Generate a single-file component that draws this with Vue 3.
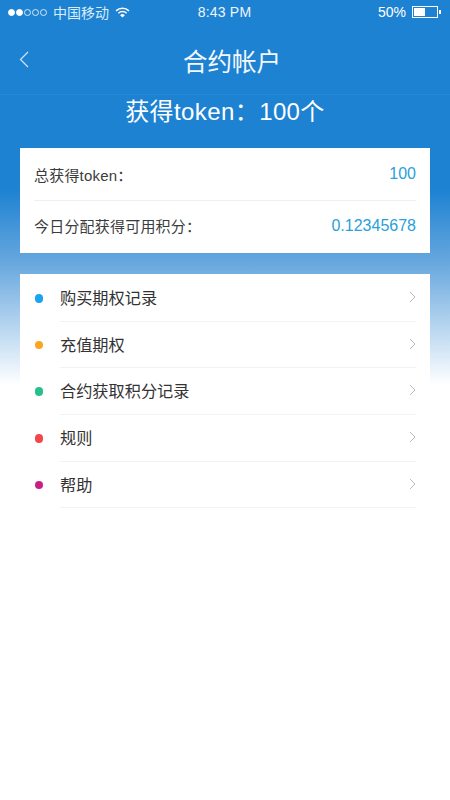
<script setup>
const stats = [
  { label: '总获得token：', value: '100' },
  { label: '今日分配获得可用积分：', value: '0.12345678' }
]
const items = [
  { label: '购买期权记录', color: '#1aa3ee' },
  { label: '充值期权', color: '#f9a623' },
  { label: '合约获取积分记录', color: '#27c08a' },
  { label: '规则', color: '#f2474a' },
  { label: '帮助', color: '#c91f80' }
]
</script>

<template>
  <div class="page">
    <div class="status">
      <div class="status-left">
        <span class="signal">
          <i class="on"></i><i class="on"></i><i></i><i></i><i></i>
        </span>
        <span class="carrier">中国移动</span>
        <svg class="wifi" width="15" height="11" viewBox="0 0 16 12">
          <path d="M1 4.2a10 10 0 0 1 14 0" fill="none" stroke="#fff" stroke-width="1.7"/>
          <path d="M3.5 6.8a6.4 6.4 0 0 1 9 0" fill="none" stroke="#fff" stroke-width="1.7"/>
          <path d="M8 11.5 5.4 8.9a3.7 3.7 0 0 1 5.2 0z" fill="#fff"/>
        </svg>
      </div>
      <span class="time">8:43 PM</span>
      <div class="status-right">
        <span>50%</span>
        <span class="battery"><b></b></span>
        <span class="tip"></span>
      </div>
    </div>

    <header class="nav">
      <svg class="back" width="10" height="17" viewBox="0 0 10 17">
        <path d="M9 1 1.5 8.5 9 16" fill="none" stroke="#cfe6fa" stroke-width="1.2"/>
      </svg>
      <h1>合约帐户</h1>
    </header>

    <h2 class="total">获得token：100个</h2>

    <section class="card stats">
      <div v-for="s in stats" :key="s.label" class="stat">
        <span class="stat-label">{{ s.label }}</span>
        <span class="stat-value">{{ s.value }}</span>
      </div>
    </section>

    <section class="card list">
      <div v-for="item in items" :key="item.label" class="item">
        <span class="dot" :style="{ background: item.color }"></span>
        <div class="item-body">
          <span>{{ item.label }}</span>
          <svg width="7" height="12" viewBox="0 0 7 12">
            <path d="M1 1l5 5-5 5" fill="none" stroke="#b9b9be" stroke-width="1"/>
          </svg>
        </div>
      </div>
    </section>
  </div>
</template>

<style scoped>
.page {
  width: 450px;
  height: 800px;
  overflow: hidden;
  box-sizing: border-box;
  background: linear-gradient(180deg, #1e82d2 0, #1e82d2 190px, #6aa9df 265px, #fff 385px);
  font-family: "Liberation Sans", "Noto Sans CJK SC", sans-serif;
  color: #fff;
}
.status {
  height: 26px;
  padding: 0 9px 2px 8px;
  box-sizing: border-box;
  display: grid;
  grid-template-columns: 1fr auto 1fr;
  align-items: center;
  font-size: 14px;
}
.status-left,
.status-right {
  display: flex;
  align-items: center;
}
.status-right {
  justify-content: flex-end;
}
.signal {
  display: flex;
  gap: 1px;
}
.signal i {
  width: 7px;
  height: 7px;
  box-sizing: border-box;
  border: 1px solid #d5e8f8;
  border-radius: 50%;
}
.signal i.on {
  background: #fff;
  border-color: #fff;
}
.carrier {
  margin-left: 6px;
  color: #d8ebfa;
}
.wifi {
  margin-left: 6px;
}
.time {
  color: #eef6fd;
  letter-spacing: 0.2px;
}
.battery {
  margin-left: 6px;
  width: 26px;
  height: 12px;
  box-sizing: border-box;
  border: 1px solid #fff;
  padding: 1px;
  display: flex;
}
.battery b {
  width: 50%;
  background: #fff;
}
.tip {
  width: 2px;
  height: 4px;
  margin-left: 1px;
  background: #fff;
}
.nav {
  height: 69px;
  padding-left: 14px;
  box-sizing: border-box;
  display: flex;
  align-items: center;
  justify-content: center;
  position: relative;
  border-bottom: 1px solid #2a88d5;
}
.back {
  position: absolute;
  left: 19px;
  top: 25px;
}
h1 {
  margin: 0;
  font-size: 24.5px;
  font-weight: 400;
  color: #f2f8fd;
}
.total {
  margin: 0;
  height: 33px;
  line-height: 33px;
  text-align: center;
  font-size: 24px;
  font-weight: 400;
  letter-spacing: 0.4px;
}
.card {
  margin: 0 20px;
  background: #fff;
}
.stats {
  margin-top: 20px;
  padding: 0 14px;
  height: 105px;
  box-sizing: border-box;
}
.stat {
  height: 52px;
  display: flex;
  align-items: center;
  justify-content: space-between;
  color: #3c3c3c;
  font-size: 15px;
  letter-spacing: 0.2px;
}
.stat:first-child {
  border-bottom: 1px solid #f0f0f0;
}
.stat:last-child {
  height: 49px;
}
.stat-value {
  color: #2a9fd8;
  font-size: 16px;
  letter-spacing: 0;
}
.list {
  margin-top: 21px;
  padding-top: 1px;
}
.item {
  height: 46.7px;
  display: flex;
  align-items: center;
  padding: 0 14px;
  color: #333;
  font-size: 16.2px;
}
.dot {
  width: 8.5px;
  height: 8.5px;
  margin-left: 0.5px;
  border-radius: 50%;
  flex: none;
}
.item-body {
  flex: 1;
  height: 100%;
  margin-left: 17px;
  padding-bottom: 2px;
  box-sizing: border-box;
  border-bottom: 1px solid #f2f2f4;
  display: flex;
  align-items: center;
  justify-content: space-between;
}
</style>
